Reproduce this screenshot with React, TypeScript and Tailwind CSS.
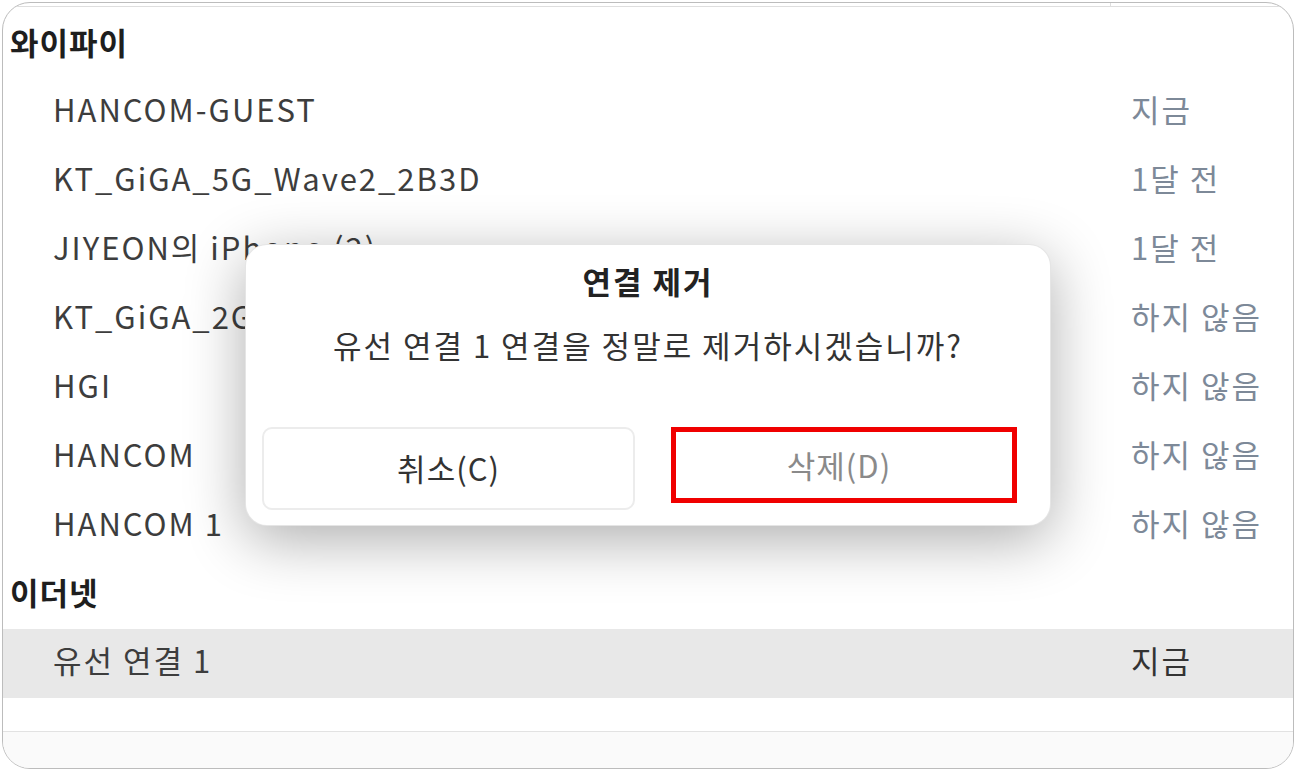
import React from "react";

const FONT = { fontFamily: '"Noto Sans CJK KR", "Noto Sans", sans-serif' };

const WIFI = [
  { name: "HANCOM-GUEST", time: "지금" },
  { name: "KT_GiGA_5G_Wave2_2B3D", time: "1달 전" },
  { name: "JIYEON의 iPhone (2)", time: "1달 전" },
  { name: "KT_GiGA_2G_Wave2_2B3D", time: "하지 않음" },
  { name: "HGI", time: "하지 않음" },
  { name: "HANCOM", time: "하지 않음" },
  { name: "HANCOM 1", time: "하지 않음" },
];

function Row({ name, time, selected }: { name: string; time: string; selected?: boolean }) {
  return (
    <div className={`flex items-center h-[69px] pb-[6px] ${selected ? "bg-[#e8e8e8]" : ""}`}>
      <div className="flex-1 pl-[50px] text-[31px] tracking-[2px] text-[#3d3d3d] whitespace-nowrap">{name}</div>
      <div
        className={`w-[162px] text-[31px] tracking-[2px] whitespace-nowrap ${
          selected ? "text-[#333]" : "text-[#7d8998]"
        }`}
      >
        {time}
      </div>
    </div>
  );
}

function SectionTitle({ children, className = "" }: { children: React.ReactNode; className?: string }) {
  return (
    <div className={`flex items-center pl-[7px] text-[31px] tracking-[1px] font-bold text-[#1e1e1e] ${className}`}>
      {children}
    </div>
  );
}

export default function App() {
  return (
    <div className="relative w-[1296px] h-[771px] bg-white p-[2px] overflow-hidden" style={FONT}>
      <div className="flex flex-col h-full border border-[#bcbcbc] rounded-[28px] overflow-hidden bg-white">
        {/* cut-off table header */}
        <div className="flex h-[4px] border-b border-[#dedede]">
          <div className="w-[1108px] border-r border-[#dedede]" />
        </div>

        <SectionTitle className="h-[71px]">와이파이</SectionTitle>
        {WIFI.map((w) => (
          <Row key={w.name} name={w.name} time={w.time} />
        ))}

        <SectionTitle className="h-[68px] pb-[6px]">이더넷</SectionTitle>
        <Row name="유선 연결 1" time="지금" selected />

        <div className="h-[33px]" />
        <div className="flex-1 border-t border-[#e2e2e2] bg-[#fafafa]" />
      </div>

      {/* confirm dialog */}
      <div className="absolute left-[245px] top-[244px] w-[806px] h-[282px] bg-white rounded-[22px] border border-black/10 shadow-[0_14px_60px_rgba(0,0,0,0.32)] flex flex-col px-[16px]">
        <div className="h-[72px] flex items-center justify-center text-[31px] tracking-[2px] font-bold text-[#222]">
          연결 제거
        </div>
        <div className="h-[56px] flex items-center justify-center text-[31px] tracking-[2px] text-[#333]">
          유선 연결 1 연결을 정말로 제거하시겠습니까?
        </div>
        <div className="flex items-start mt-[54px] gap-[36px]">
          <button className="w-[373px] h-[83px] rounded-[10px] border-2 border-[#ececec] bg-white text-[31px] tracking-[1px] text-[#333]">
            취소(C)
          </button>
          <button className="w-[346px] h-[76px] pr-[10px] border-[5px] border-[#f00000] bg-white text-[31px] tracking-[1px] text-[#8a8a8a]">
            삭제(D)
          </button>
        </div>
      </div>
    </div>
  );
}
